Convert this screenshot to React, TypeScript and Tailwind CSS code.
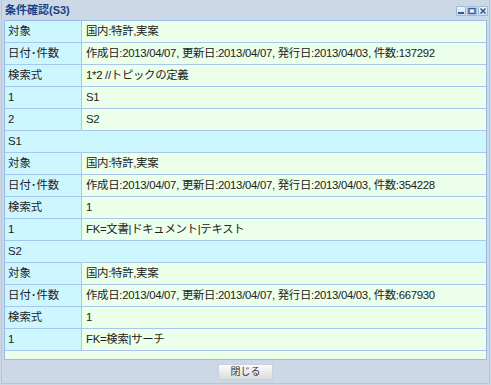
import { FC } from "react";

// Types
interface iSection {
  header?: string;
  rows: [string, string][];
}

const sections: iSection[] = [
  {
    rows: [
      ["対象", "国内:特許,実案"],
      ["日付･件数", "作成日:2013/04/07, 更新日:2013/04/07, 発行日:2013/04/03, 件数:137292"],
      ["検索式", "1*2 //トピックの定義"],
      ["1", "S1"],
      ["2", "S2"],
    ],
  },
  {
    header: "S1",
    rows: [
      ["対象", "国内:特許,実案"],
      ["日付･件数", "作成日:2013/04/07, 更新日:2013/04/07, 発行日:2013/04/03, 件数:354228"],
      ["検索式", "1"],
      ["1", "FK=文書|ドキュメント|テキスト"],
    ],
  },
  {
    header: "S2",
    rows: [
      ["対象", "国内:特許,実案"],
      ["日付･件数", "作成日:2013/04/07, 更新日:2013/04/07, 発行日:2013/04/03, 件数:667930"],
      ["検索式", "1"],
      ["1", "FK=検索|サーチ"],
    ],
  },
];

// Window tool buttons
const ToolButton: FC<{ kind: "min" | "max" | "close" }> = ({ kind }) => (
  <div className="w-[10px] h-[10px] bg-gradient-to-b from-[#eef3fa] to-[#d3dff0] border border-[#9fb6d6] rounded-[1px] flex items-center justify-center">
    <svg width="8" height="8" viewBox="0 0 8 8">
      {kind === "min" && <rect x="1" y="5" width="6" height="2" fill="#2f5a96" />}
      {kind === "max" && (
        <rect x="1" y="1.5" width="6" height="5" fill="none" stroke="#2f5a96" strokeWidth="1.4" />
      )}
      {kind === "close" && (
        <path d="M1.5 1.5 L6.5 6.5 M6.5 1.5 L1.5 6.5" stroke="#2f5a96" strokeWidth="1.5" />
      )}
    </svg>
  </div>
);

const Row: FC<{ label: string; value: string }> = ({ label, value }) => (
  <div className="flex h-[22px] border-b border-[#a9c6ee]">
    <div className="w-[77px] shrink-0 bg-[#ccf7ff] border-r border-[#a9c6ee] flex items-center pl-[3px]">
      {label}
    </div>
    <div className="flex-1 bg-[#ecffeb] flex items-center pl-[4px] whitespace-nowrap tracking-[-0.3px]">
      {value}
    </div>
  </div>
);

export default function App() {
  return (
    <div
      className="w-[491px] h-[385px] bg-[#cdd8e6] text-[#222] text-[11.4px] leading-none"
      style={{ fontFamily: '"Liberation Sans", "Noto Sans CJK JP", sans-serif' }}
    >
      <div className="h-[384px] mx-[1px] border-l border-r border-b border-[#b7c5d8] flex flex-col">
        {/* Title bar */}
        <div className="h-[20px] flex items-center justify-between pl-[3px] pr-[1px]">
          <span className="text-[11px] font-bold text-[#15428b]">条件確認(S3)</span>
          <div className="flex gap-[1px] mt-[2px]">
            <ToolButton kind="min" />
            <ToolButton kind="max" />
            <ToolButton kind="close" />
          </div>
        </div>

        {/* Body */}
        <div className="h-[340px] ml-[2px] mr-[2px] border border-[#99bbe8] bg-[#ecffeb] overflow-hidden">
          {sections.map((s, i) => (
            <div key={`s_${i}`}>
              {s.header && (
                <div className="h-[22px] border-b border-[#a9c6ee] bg-[#ccf7ff] flex items-center pl-[3px]">
                  {s.header}
                </div>
              )}
              {s.rows.map(([l, v], j) => (
                <Row key={`r_${i}_${j}`} label={l} value={v} />
              ))}
            </div>
          ))}
        </div>

        {/* Footer */}
        <div className="flex-1 flex items-center justify-center">
          <button className="w-[55px] h-[16px] bg-gradient-to-b from-[#fbfbfb] to-[#dcdcdc] border border-[#c9d0d9] text-[10px] text-[#333] flex items-center justify-center">
            閉じる
          </button>
        </div>
      </div>
    </div>
  );
}
